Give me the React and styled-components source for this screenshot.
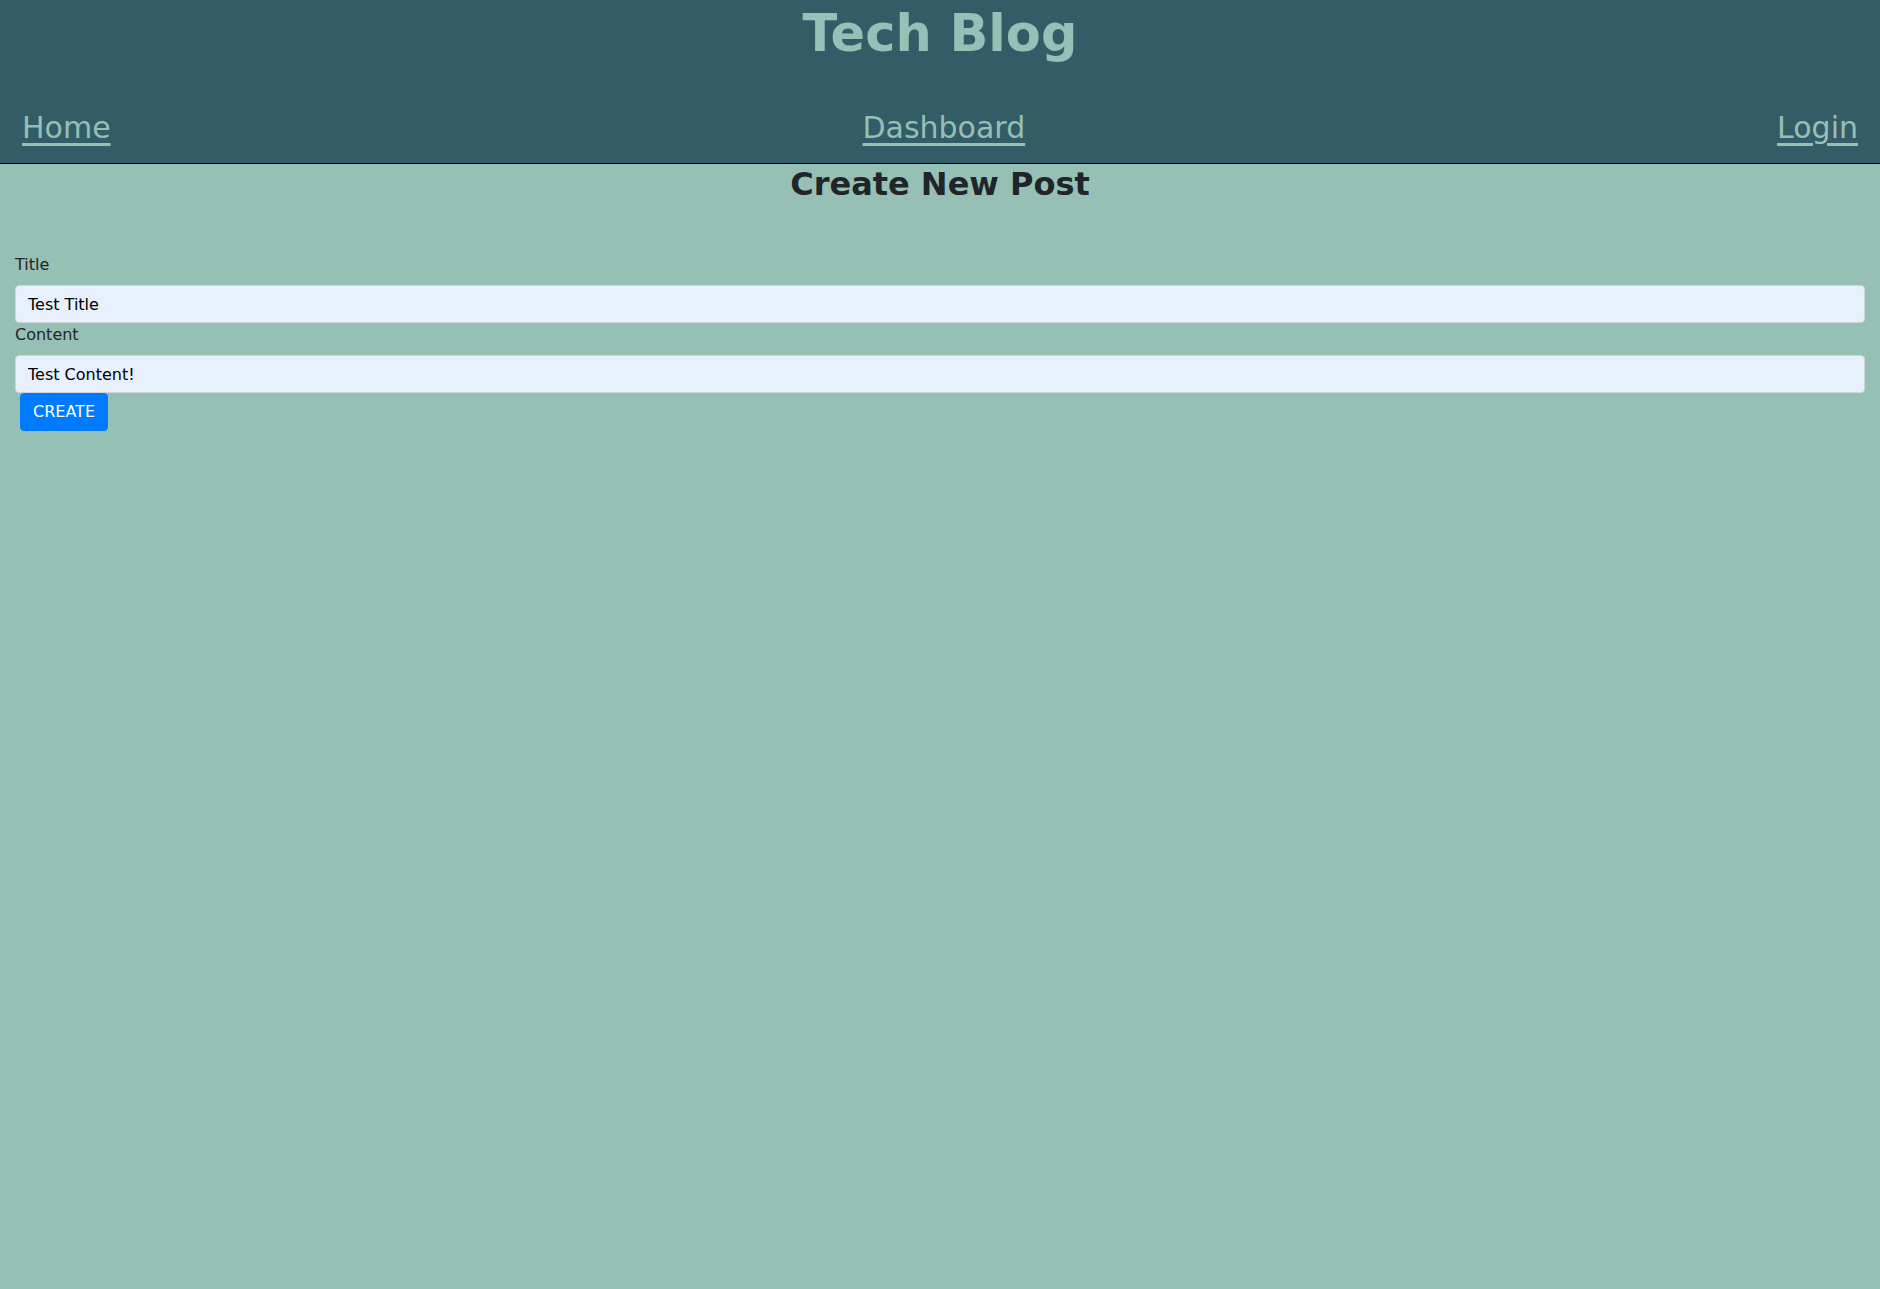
import React, { useState } from 'react';
import styled, { createGlobalStyle } from 'styled-components';

const GlobalStyle = createGlobalStyle`
    html, body{
        margin: 0;
        padding: 0;
        background: #96bfb5;
        color: #212529;
        font-family: "DejaVu Sans", Verdana, sans-serif;
        font-size: 16px;
        line-height: 1.5;
    }

    *{
        box-sizing: border-box;
    }
`

const Page = styled.div`
    min-height: 1289px;
    background: #96bfb5;
`

const Header = styled.header`
    display: flex;
    flex-direction: column;
    height: 164px;
    padding: 3px 22px 13px;
    background: #335c67;
    border-bottom: 1px solid #000;

    .title{
        margin: 0;
        text-align: center;
        font-size: 51px;
        line-height: 1.2;
        font-weight: bold;
        color: #96bfb5;
    }
`

const Nav = styled.nav`
    display: flex;
    justify-content: space-between;
    align-items: flex-end;
    margin-top: auto;

    a{
        font-size: 30px;
        line-height: 1.5;
        color: #96bfb5;
        text-decoration: underline;
        text-underline-offset: 5px;
    }
`

const Heading = styled.h2`
    margin: 1px 0 8px;
    text-align: center;
    font-size: 32px;
    line-height: 1.2;
    font-weight: bold;
    color: #212529;
`

const Form = styled.form`
    display: flex;
    flex-direction: column;
    padding: 42px 15px 0 15px;
`

const Label = styled.label`
    display: block;
    margin-bottom: 8px;
    font-size: 16px;
    line-height: 24px;
    color: #212529;
`

const Input = styled.input`
    display: block;
    width: 100%;
    height: 38px;
    padding: 6px 12px;
    font-family: "DejaVu Sans", Verdana, sans-serif;
    font-size: 16px;
    line-height: 1.5;
    color: #000;
    background: #e8f0fe;
    border: 1px solid #ced4da;
    border-radius: 4px;
    outline: none;
`

const Button = styled.button`
    align-self: flex-start;
    margin-left: 5px;
    height: 38px;
    padding: 6px 12px;
    font-family: "DejaVu Sans", Verdana, sans-serif;
    font-size: 16px;
    line-height: 1.5;
    color: #fff;
    background: #007bff;
    border: 1px solid #007bff;
    border-radius: 4px;
    cursor: pointer;
`

const App = () => {
    const [title, setTitle] = useState('Test Title')
    const [content, setContent] = useState('Test Content!')

    return(
        <Page>
            <GlobalStyle />
            <Header>
                <h1 className='title'>Tech Blog</h1>
                <Nav>
                    <a href='#home'>Home</a>
                    <a href='#dashboard'>Dashboard</a>
                    <a href='#login'>Login</a>
                </Nav>
            </Header>
            <Heading>Create New Post</Heading>
            <Form onSubmit={e => e.preventDefault()}>
                <Label htmlFor='post-title'>Title</Label>
                <Input id='post-title' value={title} onChange={e => setTitle(e.target.value)} />
                <Label htmlFor='post-content'>Content</Label>
                <Input id='post-content' value={content} onChange={e => setContent(e.target.value)} />
                <Button type='submit'>CREATE</Button>
            </Form>
        </Page>
    )
}

export default App;
